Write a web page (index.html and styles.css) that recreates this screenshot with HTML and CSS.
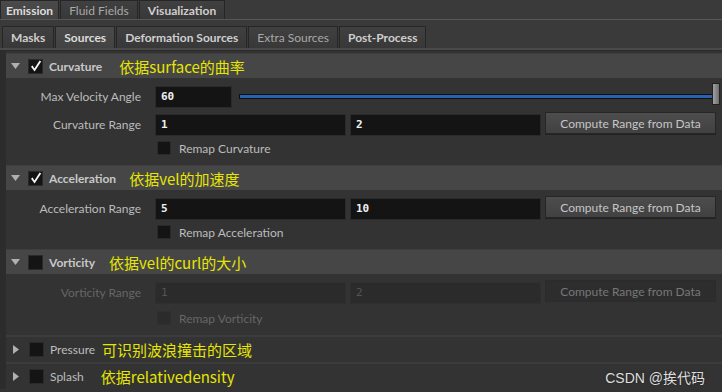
FILE: index.html
```html
<!DOCTYPE html>
<html lang="en">
<head>
    <meta charset="UTF-8">
    <title>Sources</title>
    <link rel="stylesheet" href="styles.css">
</head>
<body>
    <div class="tabs top-tabs">
        <span class="tab active">Emission</span>
        <span class="tab plain">Fluid Fields</span>
        <span class="tab">Visualization</span>
    </div>
    <div class="tabs sub-tabs">
        <span class="tab">Masks</span>
        <span class="tab active">Sources</span>
        <span class="tab">Deformation Sources</span>
        <span class="tab plain">Extra Sources</span>
        <span class="tab">Post-Process</span>
    </div>

    <div class="panel">
        <section class="group">
            <div class="group-head">
                <svg class="arrow" width="9" height="6" viewBox="0 0 9 6"><path d="M0 0h9L4.5 6z"/></svg>
                <span class="check on"><svg width="12" height="12" viewBox="0 0 12 12"><path d="M1 6.8l3.6 4.7L11.2 1.4 9.6.6 4.4 8.4 2.6 5.6z"/></svg></span>
                <span class="group-title">Curvature</span>
                <span class="note n-curv">依据surface的曲率</span>
            </div>
            <div class="group-body">
                <div class="row">
                    <span class="label">Max Velocity Angle</span>
                    <span class="field short">60</span>
                    <div class="slider">
                        <div class="track"></div>
                        <div class="handle"></div>
                    </div>
                </div>
                <div class="row">
                    <span class="label">Curvature Range</span>
                    <span class="field">1</span>
                    <span class="field">2</span>
                    <span class="btn">Compute Range from Data</span>
                </div>
                <div class="row toggle">
                    <span class="check"></span>
                    <span class="toggle-label">Remap Curvature</span>
                </div>
            </div>
        </section>

        <section class="group">
            <div class="group-head">
                <svg class="arrow" width="9" height="6" viewBox="0 0 9 6"><path d="M0 0h9L4.5 6z"/></svg>
                <span class="check on"><svg width="12" height="12" viewBox="0 0 12 12"><path d="M1 6.8l3.6 4.7L11.2 1.4 9.6.6 4.4 8.4 2.6 5.6z"/></svg></span>
                <span class="group-title">Acceleration</span>
                <span class="note n-acc">依据vel的加速度</span>
            </div>
            <div class="group-body">
                <div class="row">
                    <span class="label">Acceleration Range</span>
                    <span class="field">5</span>
                    <span class="field">10</span>
                    <span class="btn">Compute Range from Data</span>
                </div>
                <div class="row toggle">
                    <span class="check"></span>
                    <span class="toggle-label">Remap Acceleration</span>
                </div>
            </div>
        </section>

        <section class="group disabled">
            <div class="group-head">
                <svg class="arrow" width="9" height="6" viewBox="0 0 9 6"><path d="M0 0h9L4.5 6z"/></svg>
                <span class="check"></span>
                <span class="group-title">Vorticity</span>
                <span class="note n-vort">依据vel的curl的大小</span>
            </div>
            <div class="group-body">
                <div class="row">
                    <span class="label">Vorticity Range</span>
                    <span class="field">1</span>
                    <span class="field">2</span>
                    <span class="btn">Compute Range from Data</span>
                </div>
                <div class="row toggle">
                    <span class="check"></span>
                    <span class="toggle-label">Remap Vorticity</span>
                </div>
            </div>
        </section>

        <section class="group closed">
            <div class="group-head">
                <svg class="arrow" width="6" height="9" viewBox="0 0 6 9"><path d="M0 0v9l6-4.5z"/></svg>
                <span class="check"></span>
                <span class="group-title">Pressure</span>
                <span class="note n-pres">可识别波浪撞击的区域</span>
            </div>
        </section>

        <section class="group closed">
            <div class="group-head">
                <svg class="arrow" width="6" height="9" viewBox="0 0 6 9"><path d="M0 0v9l6-4.5z"/></svg>
                <span class="check"></span>
                <span class="group-title">Splash</span>
                <span class="note n-splash">依据relativedensity</span>
            </div>
        </section>
    </div>

    <div class="watermark">CSDN @挨代码</div>
</body>
</html>
```

FILE: styles.css
```css
body {
    margin: 0;
    padding: 0;
    width: 722px;
    height: 392px;
    overflow: hidden;
    position: relative;
    background-color: #333333;
    font-family: "Lato", "Noto Sans", sans-serif;
    font-size: 12px;
    color: #c4c4c4;
}

/* tab bars */

.tabs {
    display: flex;
    gap: 1px;
    background-color: #3a3a3a;
}

.top-tabs {
    height: 19px;
    border-bottom: 1px solid #575757;
}

.sub-tabs {
    padding: 6px 0 0 2px;
    height: 22px;
    border-bottom: 2px solid #4a4a4a;
}

.tab {
    display: flex;
    align-items: center;
    padding: 0 8px;
    background: linear-gradient(#404040, #383838);
    border: 1px solid #262626;
    border-bottom: none;
    font-weight: bold;
    color: #cfcfcf;
}

.top-tabs .tab:first-child {
    padding: 0 5px;
}

.tab.active {
    background: linear-gradient(#4a4a4a, #434343);
    color: #dddddd;
}

.tab.plain {
    font-weight: normal;
    color: #a8a8a8;
}

/* parameter panel */

.panel {
    padding: 2px 0 0 6px;
    border-top: 1px solid #2b2b2b;
    background-color: #333333;
    box-shadow: inset 6px 0 0 #2c2c2c;
}

.group-head {
    display: flex;
    align-items: center;
    height: 24px;
    background-color: #464646;
    border-top: 1px solid #3e3e3e;
}

.arrow {
    fill: #b0b0b0;
    margin: 0 8px 0 5px;
}

.closed .arrow {
    margin: 0 10px 0 7px;
}

.check {
    display: inline-flex;
    align-items: center;
    justify-content: center;
    width: 13px;
    height: 13px;
    background-color: #141414;
    border: 1px solid #2a2a2a;
    box-sizing: content-box;
}

.check svg {
    fill: #f4f4f4;
}

.group-title {
    margin-left: 6px;
    font-weight: bold;
    color: #c8c8c8;
}

.closed .group-head {
    background-color: #333333;
    height: 25px;
    border-top: 2px solid #3c3c3c;
}

.closed .group-title {
    font-weight: normal;
    color: #bdbdbd;
}

.note {
    font-family: "Noto Sans CJK SC", sans-serif;
    font-size: 15px;
    color: #e6e600;
}

.n-curv { margin-left: 17px; }
.n-acc { margin-left: 13px; }
.n-vort { margin-left: 14px; }
.n-pres { margin-left: 7px; }
.n-splash { margin-left: 17px; }

.group-body {
    display: flex;
    flex-direction: column;
    gap: 5px;
    padding: 7px 6px 9px 0;
}

.row {
    display: flex;
    align-items: center;
    gap: 4px;
    height: 23px;
}

.label {
    width: 135px;
    margin-right: 10px;
    text-align: right;
    color: #bcbcbc;
}

.field {
    display: flex;
    align-items: center;
    width: 191px;
    height: 22px;
    box-sizing: border-box;
    padding-left: 5px;
    background-color: #141414;
    border: 1px solid #2a2a2a;
    font-family: "DejaVu Sans Mono", monospace;
    font-weight: bold;
    font-size: 11px;
    color: #f0f0f0;
}

.field.short {
    width: 77px;
}

.slider {
    flex: 1;
    position: relative;
    height: 22px;
    margin: 0 -4px 0 3px;
}

.track {
    position: absolute;
    left: 0;
    right: 6px;
    top: 8px;
    height: 3px;
    background-color: #2a62b0;
    border: 1px solid #101010;
}

.handle {
    position: absolute;
    right: 0;
    top: -3px;
    width: 6px;
    height: 20px;
    background: linear-gradient(90deg, #a0a0a0, #6e6e6e);
    border: 1px solid #222;
}

.btn {
    flex: 1;
    display: flex;
    align-items: center;
    justify-content: center;
    height: 22px;
    margin-top: -3px;
    box-sizing: border-box;
    background: linear-gradient(#4d4d4d, #414141);
    border: 1px solid #262626;
    box-shadow: 0 1px 0 #222;
    color: #c6c6c6;
}

.toggle {
    height: 16px;
    margin-top: -1px;
    padding-left: 151px;
    gap: 0;
}

.disabled .toggle {
    margin-top: 1px;
}

.toggle .check {
    width: 12px;
    height: 12px;
}

.toggle-label {
    margin-left: 8px;
    color: #bcbcbc;
}

/* disabled group */

.disabled .label,
.disabled .toggle-label {
    color: #666666;
}

.disabled .field {
    background-color: #2b2b2b;
    border-color: #2f2f2f;
    color: #555555;
    font-weight: normal;
}

.disabled .btn {
    background: #2d2d2d;
    border-color: #2b2b2b;
    box-shadow: none;
    color: #777777;
}

.disabled .group-body .check {
    background-color: #2b2b2b;
    border-color: #2f2f2f;
}

.watermark {
    position: absolute;
    right: 17px;
    bottom: 5px;
    font-family: "Liberation Sans", "Noto Sans CJK SC", sans-serif;
    font-size: 14px;
    color: #dedede;
    text-shadow: 0 0 2px #222;
}
```
